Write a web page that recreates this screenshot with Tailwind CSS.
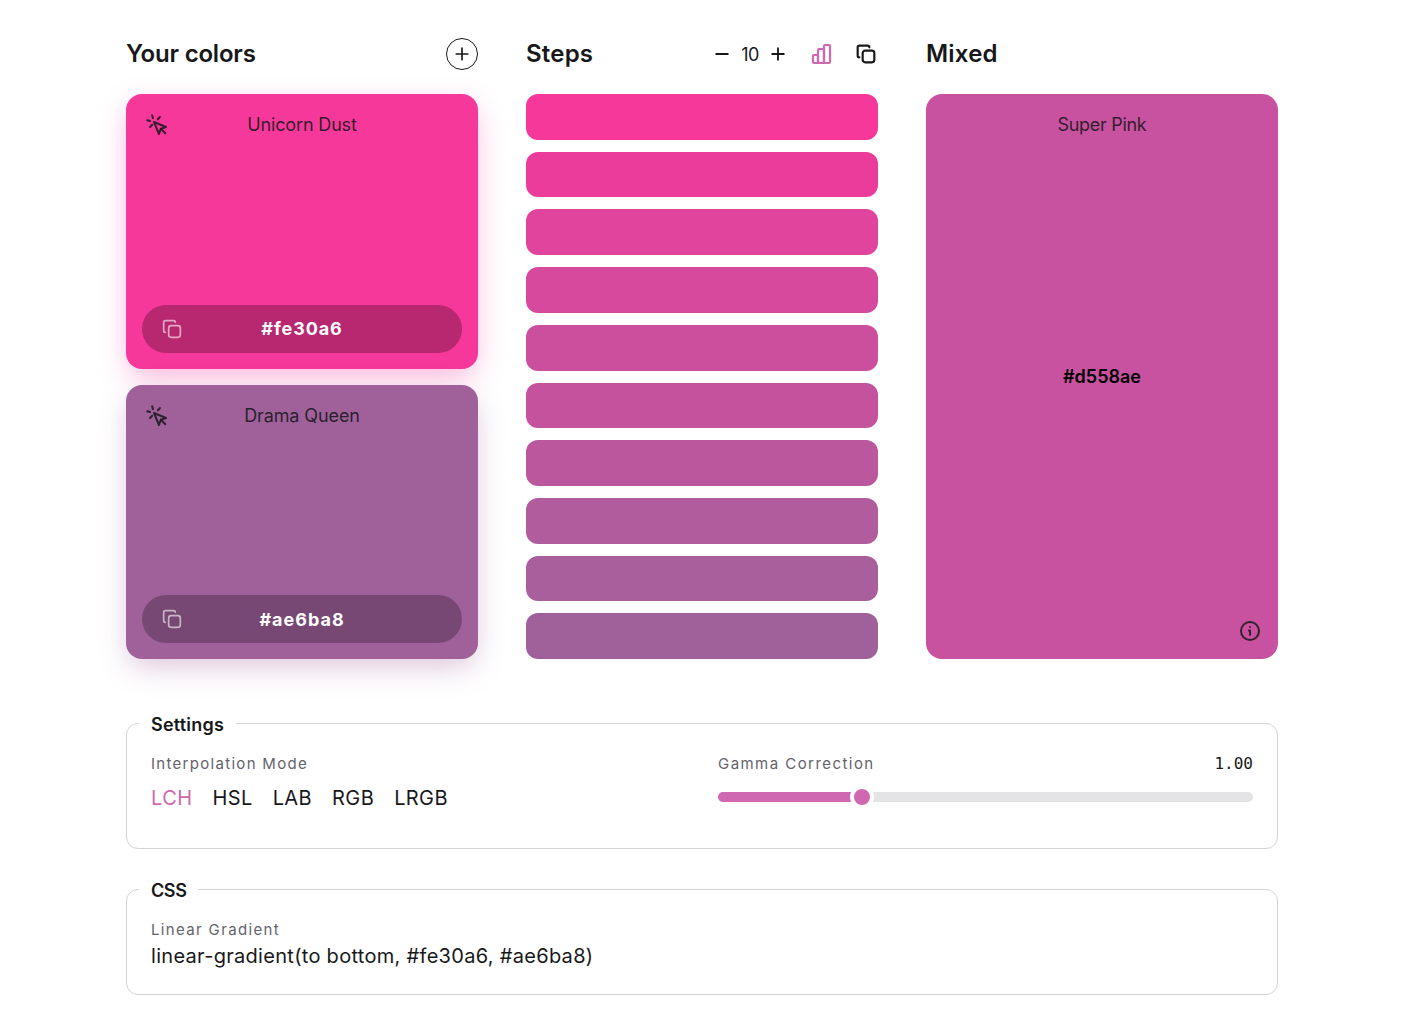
<!DOCTYPE html>
<html lang="en">
<head>
    <meta charset="UTF-8">
    <meta name="viewport" content="width=device-width, initial-scale=1.0">
    <title>Color mixer</title>
    <script src="https://cdn.jsdelivr.net/npm/@tailwindcss/browser@4"></script>
</head>
<body class="bg-white min-h-screen font-['Inter',sans-serif] text-[#18181b]">
    <div class="w-[1152px] ml-[126px] pt-[38px]">
        <div class="grid grid-cols-3 gap-12">
            <!-- Your colors -->
            <div>
                <div class="flex items-center justify-between h-8 mb-6">
                    <h2 class="text-[24px] font-semibold tracking-[-0.2px]">Your colors</h2>
                    <button class="w-8 h-8 rounded-full border border-[#18181b] flex items-center justify-center">
                        <svg class="w-5 h-5" viewBox="0 0 24 24" fill="none" stroke="currentColor" stroke-width="2" stroke-linecap="round"><path d="M5 12h14M12 5v14"/></svg>
                    </button>
                </div>
                <div class="flex flex-col gap-4 h-[565px]">
                    <div class="relative flex-1 rounded-2xl bg-[#f7389b] shadow-[0_10px_30px_-4px_rgba(247,56,155,0.4)] flex flex-col justify-between p-4 pt-[19px]">
                        <svg class="absolute left-[19px] top-[19px] w-6 h-6 text-[#18181b]/85" viewBox="0 0 24 24" fill="none" stroke="currentColor" stroke-width="2" stroke-linecap="round" stroke-linejoin="round"><path d="m9 9 5 12 1.774-5.226L21 14 9 9z"/><path d="m16.071 16.071 4.243 4.243"/><path d="m7.188 2.239.777 2.897M5.134 7.965l-2.898-.777M14.95 4.05l-2.122 2.122m-5.657 5.656-2.12 2.122"/></svg>
                        <p class="text-center text-[18px] leading-6 tracking-[-0.15px] text-[#18181b]/90">Unicorn Dust</p>
                        <div class="relative h-12 rounded-full bg-[#b72871] flex items-center justify-center text-white text-[18px] font-bold tracking-[0.9px]">
                            <svg class="absolute left-[20px] top-[14px] w-5 h-5 text-white/60" viewBox="0 0 24 24" fill="none" stroke="currentColor" stroke-width="2" stroke-linecap="round" stroke-linejoin="round"><rect width="14" height="14" x="8" y="8" rx="3" ry="3"/><path d="M4 16c-1.1 0-2-.9-2-2V4c0-1.1.9-2 2-2h10c1.1 0 2 .9 2 2"/></svg>
                            #fe30a6
                        </div>
                    </div>
                    <div class="relative flex-1 rounded-2xl bg-[#a0619b] shadow-[0_10px_30px_-4px_rgba(160,97,155,0.4)] flex flex-col justify-between p-4 pt-[19px]">
                        <svg class="absolute left-[19px] top-[19px] w-6 h-6 text-[#18181b]/85" viewBox="0 0 24 24" fill="none" stroke="currentColor" stroke-width="2" stroke-linecap="round" stroke-linejoin="round"><path d="m9 9 5 12 1.774-5.226L21 14 9 9z"/><path d="m16.071 16.071 4.243 4.243"/><path d="m7.188 2.239.777 2.897M5.134 7.965l-2.898-.777M14.95 4.05l-2.122 2.122m-5.657 5.656-2.12 2.122"/></svg>
                        <p class="text-center text-[18px] leading-6 tracking-[-0.1px] text-[#18181b]/90">Drama Queen</p>
                        <div class="relative h-12 rounded-full bg-[#774873] flex items-center justify-center text-white text-[18px] font-bold tracking-[1px]">
                            <svg class="absolute left-[20px] top-[14px] w-5 h-5 text-white/60" viewBox="0 0 24 24" fill="none" stroke="currentColor" stroke-width="2" stroke-linecap="round" stroke-linejoin="round"><rect width="14" height="14" x="8" y="8" rx="3" ry="3"/><path d="M4 16c-1.1 0-2-.9-2-2V4c0-1.1.9-2 2-2h10c1.1 0 2 .9 2 2"/></svg>
                            #ae6ba8
                        </div>
                    </div>
                </div>
            </div>

            <!-- Steps -->
            <div>
                <div class="flex items-center justify-between h-8 mb-6">
                    <h2 class="text-[24px] font-semibold tracking-[0.2px]">Steps</h2>
                    <div class="flex items-center">
                        <svg class="w-5 h-5" viewBox="0 0 24 24" fill="none" stroke="currentColor" stroke-width="2.2" stroke-linecap="round"><path d="M5 12h14"/></svg>
                        <span class="w-9 text-center text-[18px] tracking-[-0.5px]">10</span>
                        <svg class="w-5 h-5" viewBox="0 0 24 24" fill="none" stroke="currentColor" stroke-width="2.2" stroke-linecap="round"><path d="M5 12h14M12 5v14"/></svg>
                        <svg class="w-6 h-6 ml-[22px] text-[#cf68b0]" viewBox="0 0 24 24" fill="none" stroke="currentColor" stroke-width="2.2" stroke-linejoin="round"><path d="M3 14a1 1 0 0 1 1-1h3a1 1 0 0 1 1 1v7H4a1 1 0 0 1-1-1z"/><path d="M8 21V8a1 1 0 0 1 1-1h4a1 1 0 0 1 1 1v13z"/><path d="M14 21V4a1 1 0 0 1 1-1h4a1 1 0 0 1 1 1v16a1 1 0 0 1-1 1z"/></svg>
                        <svg class="w-5 h-5 ml-[22px] mr-[2px]" viewBox="0 0 24 24" fill="none" stroke="currentColor" stroke-width="2.6" stroke-linecap="round" stroke-linejoin="round"><rect width="14" height="14" x="8" y="8" rx="3" ry="3"/><path d="M4 16c-1.1 0-2-.9-2-2V4c0-1.1.9-2 2-2h10c1.1 0 2 .9 2 2"/></svg>
                    </div>
                </div>
                <div class="flex flex-col gap-3 h-[565px]">
                    <div class="flex-1 rounded-xl bg-[#f7389b]"></div>
                    <div class="flex-1 rounded-xl bg-[#ec3c9b]"></div>
                    <div class="flex-1 rounded-xl bg-[#e1449c]"></div>
                    <div class="flex-1 rounded-xl bg-[#d6499c]"></div>
                    <div class="flex-1 rounded-xl bg-[#cc4f9d]"></div>
                    <div class="flex-1 rounded-xl bg-[#c4529d]"></div>
                    <div class="flex-1 rounded-xl bg-[#bb589d]"></div>
                    <div class="flex-1 rounded-xl bg-[#b15c9d]"></div>
                    <div class="flex-1 rounded-xl bg-[#a95f9c]"></div>
                    <div class="flex-1 rounded-xl bg-[#a0619b]"></div>
                </div>
            </div>

            <!-- Mixed -->
            <div>
                <div class="flex items-center h-8 mb-6">
                    <h2 class="text-[24px] font-semibold tracking-[0.2px]">Mixed</h2>
                </div>
                <div class="relative h-[565px] rounded-2xl bg-[#c952a0] flex flex-col items-center pt-[19px]">
                    <p class="text-[18px] leading-6 tracking-[-0.3px] text-[#18181b]/90">Super Pink</p>
                    <p class="mt-[228px] text-[18px] leading-6 font-semibold text-black">#d558ae</p>
                    <svg class="absolute right-[16px] bottom-[16px] w-6 h-6 text-[#18181b]/85" viewBox="0 0 24 24" fill="none" stroke="currentColor" stroke-width="2" stroke-linecap="round" stroke-linejoin="round"><circle cx="12" cy="12" r="9"/><path d="M12 16v-4.5M11 11.5h1"/><path d="M12 8h.01"/></svg>
                </div>
            </div>
        </div>

        <!-- Settings -->
        <fieldset class="mt-[48px] border border-[#d4d4d8] rounded-xl px-6 h-[142px]">
            <legend class="-ml-3 px-3 pt-[4px] text-[18px] leading-7 font-semibold tracking-[0.2px]">Settings</legend>
            <div class="grid grid-cols-2 gap-[32px] pt-[15px]">
                <div>
                    <p class="text-[15px] leading-5 text-[#63636b] tracking-[1.3px]">Interpolation Mode</p>
                    <div class="flex gap-5 mt-[12px] text-[20px] leading-6 tracking-[0.4px]">
                        <span class="text-[#cf68b0]">LCH</span>
                        <span>HSL</span>
                        <span>LAB</span>
                        <span>RGB</span>
                        <span>LRGB</span>
                    </div>
                </div>
                <div>
                    <div class="flex justify-between items-center">
                        <p class="text-[15px] leading-5 text-[#63636b] tracking-[1.45px]">Gamma Correction</p>
                        <span class="font-['DejaVu_Sans_Mono',monospace] text-[16px] leading-5">1.00</span>
                    </div>
                    <div class="relative h-2.5 mt-[18px] rounded-full bg-[#e4e4e7]">
                        <div class="h-full w-[144px] rounded-full bg-[#cf68b0]"></div>
                        <div class="absolute left-[132px] -top-[7px] w-6 h-6 rounded-full bg-[#cf68b0] border-4 border-white"></div>
                    </div>
                </div>
            </div>
        </fieldset>

        <!-- CSS -->
        <fieldset class="mt-[24px] border border-[#d4d4d8] rounded-xl px-6 h-[122px]">
            <legend class="-ml-3 px-3 pt-[4px] text-[18px] leading-7 font-semibold tracking-[-0.4px]">CSS</legend>
            <div class="pt-[15px]">
                <p class="text-[15px] leading-5 text-[#63636b] tracking-[1.35px]">Linear Gradient</p>
                <p class="mt-[2px] text-[20px] leading-7 tracking-[0.3px]">linear-gradient(to bottom, #fe30a6, #ae6ba8)</p>
            </div>
        </fieldset>
    </div>
</body>
</html>
